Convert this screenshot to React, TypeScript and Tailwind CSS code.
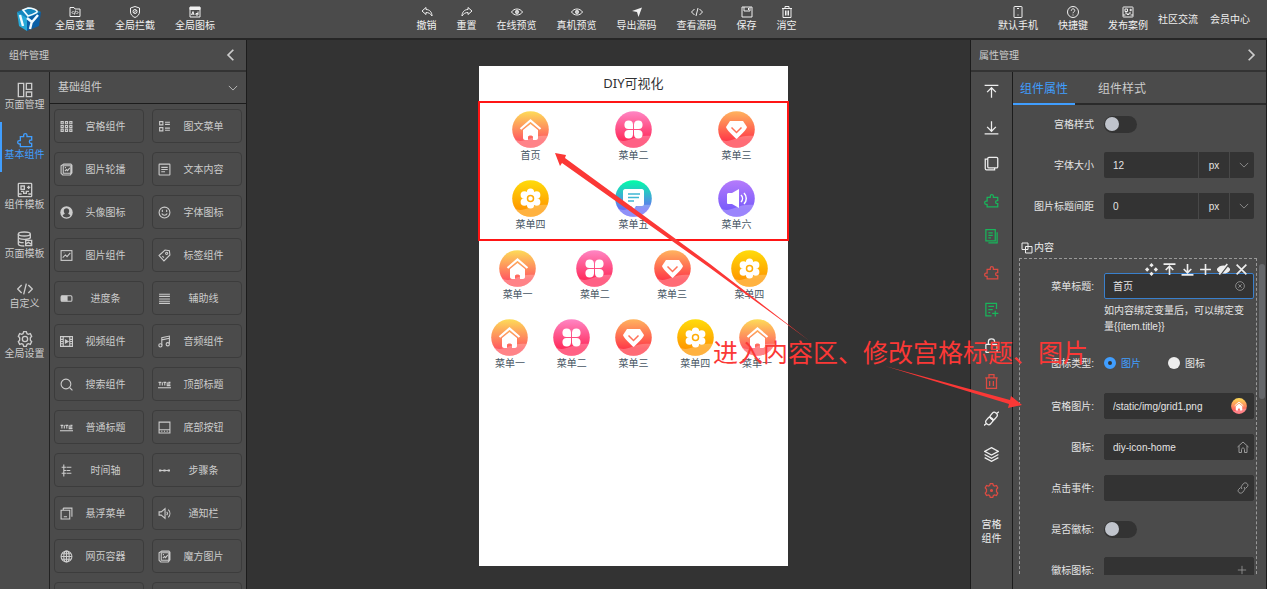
import { useId, useState } from 'react'
import type { ReactNode } from 'react'

type IconProps = {
  name: string
  className?: string
}

type MenuKind = 'home' | 'clover' | 'diamond' | 'flower' | 'message' | 'sound'

type MenuItem = {
  kind: MenuKind
  title: string
}

const panelIcon = (
  <>
    <rect x="2" y="2" width="20" height="20" rx="1" />
    <path d="M6 6h5v5H6zM15 8h5M17.500 5.500v5M6 14h4v3h4v-3h4M2 18h5M17 18h5" />
  </>
)

const pictureIcon = (
  <>
    <rect x="2" y="3" width="20" height="18" />
    <path d="M5 16l5-5 3 3 6-7M7 7h1" />
  </>
)

const roundPictureIcon = (
  <>
    <path d="M7 2h13l2 2v14l-3 4H5l-3-3V5zM6 5v14h14V5z" />
    <path d="M9 15l3-3 2 2 4-5M9 8.500h2" />
  </>
)

const puzzleIcon = (
  <path d="M5 7h5V5a2.500 2.500 0 0 1 5 0v2h7v5h-1a2.500 2.500 0 0 0 0 5h1v5H5v-4H3.500a2.500 2.500 0 0 1 0-5H5z" />
)

const titleIcon = (
  <>
    <path d="M1 8h5M3.500 8v6M8 8v6M10 8h5M12.500 8v6M17 8v6h2M23 8h-3v6h3M20 11h3" />
    <path d="M0 18h24" />
  </>
)

const icons: Record<string, ReactNode> = {
  folderCode: (
    <>
      <path d="M2 21V3h8l2 3h10v15z" />
      <path d="M9 10l-3 3 3 3M15 10l3 3-3 3M13 9l-2 8" />
    </>
  ),
  shield: (
    <>
      <path d="M12 1l9 3v8c0 5-4 9-9 11-5-2-9-6-9-11V4z" />
      <circle cx="12" cy="11" r="4" />
      <path d="M9 14l6-6" />
    </>
  ),
  fontBox: (
    <>
      <path d="M2 2h20v20H2z" />
      <path d="M2 3h20v4H2z" fill="currentColor" />
      <path d="M5 18l3-7 2 7M6 16h3M18 11v7M18 15h-4v3h4" />
    </>
  ),
  undo: <path d="M10 3L2 10l8 7v-4c5 0 9 2 12 7 0-8-5-13-12-13z" />,
  redo: <path d="M14 3l8 7-8 7v-4c-5 0-9 2-12 7 0-8 5-13 12-13z" />,
  eye: (
    <>
      <path d="M1 12c5-8 17-8 22 0-5 8-17 8-22 0z" />
      <circle cx="12" cy="12" r="2.500" strokeWidth="3" />
    </>
  ),
  send: <path d="M2 10L22 3l-7 19-3-10z" fill="currentColor" stroke="none" />,
  code: <path d="M7 6l-6 6 6 6M17 6l6 6-6 6M14 4l-4 16" />,
  save: (
    <>
      <path d="M2 2h20v20H2zM6 2v8h12V2" />
      <path d="M15 4v4" />
    </>
  ),
  trash: <path d="M2 5h20M8 5V1h8v4M4 5v18h16V5M9 9v10M12 9v10M15 9v10" />,
  phone: (
    <>
      <rect x="4" y="1" width="16" height="22" rx="1" />
      <path d="M10 5h4M11 18h2" />
    </>
  ),
  help: (
    <>
      <circle cx="12" cy="12" r="11" />
      <path d="M8.500 9.500c0-5 7-5 7-.500 0 3-3.500 2.500-3.500 5.500M12 17v2" />
    </>
  ),
  panel: panelIcon,
  layout: <path d="M2 2h8v20H2zM14 2h8v9h-8zM14 15h8v7h-8z" />,
  puzzle: puzzleIcon,
  database: (
    <>
      <ellipse cx="11" cy="4.500" rx="9" ry="3" />
      <path d="M2 4.500v15c0 2 4 3 9 3M20 4.500V11M2 9.500c0 2 4 3 9 3M2 14.500c0 2 4 3 8 3M20 10c-1 2-4 2.500-9 2.500" />
      <path d="M13 14h9v8h-9zM13 20l4-3 5 3" />
    </>
  ),
  gear: (
    <>
      <path d="M10 1h4l1 3 2 1 3-1 2 4-2 2v4l2 2-2 4-3-1-2 1-1 3h-4l-1-3-2-1-3 1-2-4 2-2v-4L2 8l2-4 3 1 2-1z" />
      <circle cx="12" cy="12" r="4" />
    </>
  ),
  grid: <path d="M2 3h4v4H2zM10 3h4v4h-4zM18 3h4v4h-4zM2 10h4v4H2zM10 10h4v4h-4zM18 10h4v4h-4zM2 17h4v4H2zM10 17h4v4h-4zM18 17h4v4h-4z" />,
  list: <path d="M3 3h6v6H3zM3 14h6v6H3zM13 4h9M13 8h9M13 15h9M13 19h9" />,
  roundPicture: roundPictureIcon,
  text: (
    <>
      <rect x="2" y="2" width="20" height="20" rx="1" />
      <path d="M6 8h12M6 12h12M6 16h7" />
    </>
  ),
  avatar: (
    <>
      <circle cx="12" cy="12" r="11.500" fill="currentColor" stroke="none" />
      <path
        d="M12 4c3 0 5 2 5 5 0 2-1 4-2 5 0 2 4 1 4 4-3 4-11 4-14 0 0-3 4-2 4-4-1-1-2-3-2-5 0-3 2-5 5-5z"
        fill="#4b4b4b"
        stroke="none"
      />
    </>
  ),
  smile: (
    <>
      <circle cx="12" cy="12" r="10" />
      <path d="M8 7v4M16 7v4M7 14c2 4 8 4 10 0" />
    </>
  ),
  picture: pictureIcon,
  tag: (
    <>
      <path d="M2 12L13 2l8 1 1 8-11 11z" />
      <circle cx="16" cy="8" r="2" />
      <path d="M8 13l3 3" />
    </>
  ),
  progress: (
    <>
      <rect x="2" y="7" width="20" height="10" rx="2" />
      <path d="M3 8h10v8H3z" fill="currentColor" />
    </>
  ),
  lines: <path d="M2 4h20M2 8h20M2 13h20M2 17h20M2 21h20" />,
  video: (
    <>
      <path d="M1 3h22v18H1zM6 3v18M18 3v18M1 8h5M1 12h5M1 16h5M18 8h5M18 12h5M18 16h5" />
      <path d="M10 9l5 3-5 3z" fill="currentColor" />
    </>
  ),
  music: (
    <>
      <path d="M7 19V5l14-3v14M7 9l14-3" />
      <circle cx="4.500" cy="19" r="3" />
      <circle cx="18" cy="17" r="3" />
    </>
  ),
  search: (
    <>
      <circle cx="11" cy="11" r="9" />
      <path d="M18 18l5 5" />
    </>
  ),
  title: titleIcon,
  bottomBar: <path d="M2 2h20v20H2zM2 16h20M6 19h2M11 19h2M16 19h2" />,
  timeline: <path d="M7 1v22M3 6h8M3 17h8M12 6h9M12 12h7M12 17h9M7 12h4" />,
  steps: (
    <>
      <path d="M2 12h20" />
      <path d="M3 11h2v2H3zM11 11h2v2h-2zM19 11h2v2h-2z" fill="currentColor" />
    </>
  ),
  window: <path d="M2 6h16v16H2zM6 2h16v16M6 2v3M7 18h6" />,
  sound: <path d="M2 9h4l7-6v18l-7-6H2zM16 9c2 2 2 4 0 6M19 5c4 4 4 10 0 14" />,
  globe: (
    <>
      <circle cx="12" cy="12" r="10" />
      <ellipse cx="12" cy="12" rx="5" ry="10" />
      <path d="M2 12h20M4 7h16M4 17h16M12 2v20" />
    </>
  ),
  chevronLeft: <path d="M16 3l-9 9 9 9" strokeWidth="3" />,
  chevronRight: <path d="M8 3l9 9-9 9" strokeWidth="3" />,
  chevronDown: <path d="M2 7l10 10L22 7" />,
  toTop: <path d="M1 2h22M12 22V6M5 13l7-7 7 7" />,
  toBottom: <path d="M1 22h22M12 2v16M5 11l7 7 7-7" />,
  copy: (
    <>
      <rect x="6" y="2" width="16" height="17" rx="2" />
      <path d="M6 5H2v15c0 1 1 2 2 2h13v-3" />
    </>
  ),
  pages: <path d="M3 1h15v18H3zM7 6h7M7 10h7M7 14h4M21 5v17H7" />,
  noteAdd: <path d="M20 11V2H3v20h9M7 7h9M7 12h7M7 17h3M18 14v9M13 18h10" />,
  lock: (
    <>
      <rect x="3" y="10" width="18" height="13" rx="1" />
      <path d="M7 10V6c0-6 10-6 10 0v2M12 14v4" />
    </>
  ),
  bin: <path d="M2 6h20M8 6V1h8v5M4 6v17h16V6M9 11v8M15 11v8" />,
  link: (
    <>
      <rect x="4" y="10" width="9" height="12" rx="4" transform="rotate(40 8.500 16)" />
      <rect x="11" y="2" width="9" height="12" rx="4" transform="rotate(40 15.500 8)" />
      <path d="M0 23l4-3M20 4l4-3M8 9l8 7" />
    </>
  ),
  chain: <path d="M10 14c-3-3-1-6 0-7l3-4c5-4 11 2 8 6l-4 4M14 10c3 3 1 6 0 7l-3 4c-5 4-11-2-8-6l4-4" />,
  layers: <path d="M12 1l11 6-11 6L1 7zM1 12l11 6 11-6M1 17l11 6 11-6" />,
  cog: (
    <>
      <path d="M10 1h4l1 3 2 1 3-1 2 4-2 2v4l2 2-2 4-3-1-2 1-1 3h-4l-1-3-2-1-3 1-2-4 2-2v-4L2 8l2-4 3 1 2-1z" />
      <circle cx="12" cy="12" r="1.500" fill="currentColor" />
    </>
  ),
  union: <path d="M2 2h12v13H2zM9 9h13v13H9z" />,
  move: (
    <path
      d="M12 0l4 4-4 4-4-4zM12 16l4 4-4 4-4-4zM0 12l4-4 4 4-4 4zM16 12l4-4 4 4-4 4z"
      fill="currentColor"
      stroke="none"
    />
  ),
  plus: <path d="M12 2v20M2 12h20" />,
  eyeOff: (
    <>
      <path d="M1 12c5-8 17-8 22 0-5 8-17 8-22 0z" fill="currentColor" />
      <path d="M6 22L21 3" stroke="#4b4b4b" />
      <path d="M4 21L19 2" />
    </>
  ),
  close: <path d="M3 3l18 18M21 3L3 21" />,
  clear: (
    <>
      <circle cx="12" cy="12" r="10.500" />
      <path d="M8 8l8 8M16 8l-8 8" />
    </>
  ),
  house: <path d="M1 12L12 2l11 10M4 10v13h5v-6c0-4 6-4 6 0v6h5V10" />,
}

function Icon({ name, className = 'size-3' }: IconProps) {
  return (
    <svg
      viewBox="0 0 24 24"
      fill="none"
      stroke="currentColor"
      strokeWidth="2"
      className={`shrink-0 ${className}`}
      aria-hidden="true"
    >
      {icons[name]}
    </svg>
  )
}

function Logo() {
  return (
    <svg viewBox="0 0 24 24" className="w-6 shrink-0" aria-label="DIY">
      <path d="M0 5l10 5v14L2 19z" fill="#27a9d8" />
      <path d="M24 5l-14 5v14l12-5z" fill="#0b5fa6" />
      <path d="M0 5l12-5 12 5-14 6z" fill="#1487bf" />
      <path d="M6 3l5-2c4 0 10 2 9 4-2 2-6 3-9 4z" fill="none" stroke="#f2fbff" strokeWidth="1.700" />
      <path d="M3 8l3 11" fill="none" stroke="#f2fbff" strokeWidth="2.400" />
      <path d="M10 11l5 4 6-7M15 14l-2 8" fill="none" stroke="#f2fbff" strokeWidth="2.400" />
    </svg>
  )
}

const gradients: Record<MenuKind, [string, string]> = {
  home: ['#fddc58', '#ff5a60'],
  clover: ['#ff86c4', '#ff2c5c'],
  diamond: ['#ffb45f', '#ff3b48'],
  flower: ['#ffdc0a', '#ff9800'],
  message: ['#00ffa6', '#6a6cf6'],
  sound: ['#b57bfb', '#7a5cfb'],
}

const menuShapes: Record<MenuKind, ReactNode> = {
  home: (
    <>
      <path d="M11 19v8c0 1 1 2 2 2h3v-3c0-2 5-2 5 0v3h3c1 0 2-1 2-2v-8l-7.500-6z" fill="#fff" />
      <path d="M8.500 18L18.500 9.500l10 8.500" fill="none" stroke="#fff" strokeWidth="2.200" />
    </>
  ),
  clover: (
    <g fill="#fff">
      <path d="M18 18h-4.500a4.300 4.300 0 1 1 4.500-4.500zM19 18v-4.500a4.300 4.300 0 1 1 4.500 4.500zM18 19v4.500a4.300 4.300 0 1 1-4.500-4.500zM19 19h4.500a4.300 4.300 0 1 1-4.500 4.500z" />
    </g>
  ),
  diamond: (
    <>
      <path d="M12 10h13l4 6c0 2-8 10-10.500 12C16 26 8 18 8 16z" fill="#fff" />
      <path d="M13.500 16.500l5 5 5-5" fill="none" stroke="#ff7259" strokeWidth="1.500" />
    </>
  ),
  flower: (
    <>
      <g fill="#fff">
        <circle cx="18.500" cy="12" r="3.600" />
        <circle cx="18.500" cy="25" r="3.600" />
        <circle cx="12.400" cy="15" r="3.800" />
        <circle cx="24.600" cy="15" r="3.800" />
        <circle cx="12.400" cy="22" r="3.800" />
        <circle cx="24.600" cy="22" r="3.800" />
        <circle cx="18.500" cy="18.500" r="6.500" />
      </g>
      <circle cx="18.500" cy="18.500" r="3" fill="none" stroke="#ffac05" strokeWidth="1.500" />
    </>
  ),
  message: (
    <>
      <path d="M10 9h17c1 0 2 1 2 2v13c0 1-1 2-2 2h-6l-2 3-3-3h-6c-1 0-2-1-2-2V11c0-1 1-2 2-2z" fill="#fff" />
      <path d="M13 14h12M13 17.500h11M13 21h6" fill="none" stroke="#3fb7d3" strokeWidth="1.300" />
    </>
  ),
  sound: (
    <>
      <path d="M10 13h4l7-4v19l-7-4h-4c-1 0-1-1-1-1v-9z" fill="#fff" />
      <path d="M23 15c2 2 2 5 0 7M26 13c3 3 3 8 0 11" fill="none" stroke="#fff" strokeWidth="1.500" />
    </>
  ),
}

function MenuIcon({ kind, className = 'size-[37px]' }: { kind: MenuKind; className?: string }) {
  const id = useId()
  const [from, to] = gradients[kind]

  return (
    <svg viewBox="0 0 37 37" className={className} aria-hidden="true">
      <defs>
        <linearGradient id={id} x1="0" y1="0" x2="0" y2="1">
          <stop offset="0" stopColor={from} />
          <stop offset="0.800" stopColor={to} />
        </linearGradient>
      </defs>
      <circle cx="18.500" cy="18.500" r="18.300" fill={`url(#${id})`} />
      <path d="M2.500 28c4 3 9 2 14 0 7-3 13-4 20-3-3 7-9 11.500-18 11.500-7 0-12-3-16-8.500z" fill="#fff" fillOpacity="0.250" />
      {menuShapes[kind]}
    </svg>
  )
}

function TopButton({ icon, label }: { icon: string; label: string }) {
  return (
    <button type="button" className="flex flex-col items-center gap-px">
      <Icon name={icon} className="size-3" />
      <span className="leading-[14px]">{label}</span>
    </button>
  )
}

function TopBar() {
  return (
    <header className="flex h-10 shrink-0 items-center justify-between border-b-2 border-[#262626] bg-[#4b4b4b] px-[17px] text-[#f0f0f0]">
      <div className="flex items-center gap-5">
        <div className="flex items-center gap-3.5">
          <Logo />
          <TopButton icon="folderCode" label="全局变量" />
        </div>
        <TopButton icon="shield" label="全局拦截" />
        <TopButton icon="fontBox" label="全局图标" />
      </div>
      <div className="flex items-center gap-5">
        <TopButton icon="undo" label="撤销" />
        <TopButton icon="redo" label="重置" />
        <TopButton icon="eye" label="在线预览" />
        <TopButton icon="eye" label="真机预览" />
        <TopButton icon="send" label="导出源码" />
        <TopButton icon="code" label="查看源码" />
        <TopButton icon="save" label="保存" />
        <TopButton icon="trash" label="消空" />
      </div>
      <div className="flex items-center gap-5">
        <TopButton icon="phone" label="默认手机" />
        <TopButton icon="help" label="快捷键" />
        <div className="flex items-center gap-2.5">
          <TopButton icon="panel" label="发布案例" />
          <a href="#community">社区交流</a>
        </div>
        <a href="#member" className="-ml-2">会员中心</a>
      </div>
    </header>
  )
}

const navItems = [
  { icon: 'layout', label: '页面管理' },
  { icon: 'puzzle', label: '基本组件' },
  { icon: 'panel', label: '组件模板' },
  { icon: 'database', label: '页面模板' },
  { icon: 'code', label: '自定义' },
  { icon: 'gear', label: '全局设置' },
]

const components = [
  { icon: 'grid', label: '宫格组件' },
  { icon: 'list', label: '图文菜单' },
  { icon: 'roundPicture', label: '图片轮播' },
  { icon: 'text', label: '文本内容' },
  { icon: 'avatar', label: '头像图标' },
  { icon: 'smile', label: '字体图标' },
  { icon: 'picture', label: '图片组件' },
  { icon: 'tag', label: '标签组件' },
  { icon: 'progress', label: '进度条' },
  { icon: 'lines', label: '辅助线' },
  { icon: 'video', label: '视频组件' },
  { icon: 'music', label: '音频组件' },
  { icon: 'search', label: '搜索组件' },
  { icon: 'title', label: '顶部标题' },
  { icon: 'title', label: '普通标题' },
  { icon: 'bottomBar', label: '底部按钮' },
  { icon: 'timeline', label: '时间轴' },
  { icon: 'steps', label: '步骤条' },
  { icon: 'window', label: '悬浮菜单' },
  { icon: 'sound', label: '通知栏' },
  { icon: 'globe', label: '网页容器' },
  { icon: 'roundPicture', label: '魔方图片' },
  { icon: '', label: '' },
  { icon: '', label: '' },
]

function LeftPanel() {
  const [active, setActive] = useState('基本组件')

  return (
    <aside className="flex w-[247px] shrink-0 flex-col border-r border-[#1c1c1c] bg-[#4b4b4b] text-[#ccc]">
      <div className="flex h-8 shrink-0 items-center justify-between border-b-2 border-[#333] pr-2 pl-[9px]">
        <h2>组件管理</h2>
        <button type="button" aria-label="收起">
          <Icon name="chevronLeft" className="size-3.5" />
        </button>
      </div>
      <div className="flex min-h-0 flex-1">
        <nav className="w-[50px] shrink-0 border-r border-[#222]">
          <div className="flex h-[299px] flex-col">
            {navItems.map((item) => (
              <button
                key={item.label}
                type="button"
                onClick={() => setActive(item.label)}
                className={`flex flex-1 flex-col items-center justify-center border-l-2 pr-0.5 ${
                  item.label === active ? 'border-[#409eff] text-[#409eff]' : 'border-transparent'
                }`}
              >
                <Icon name={item.icon} className="size-4" />
                <span className="leading-[14px] whitespace-nowrap">{item.label}</span>
              </button>
            ))}
          </div>
        </nav>
        <div className="flex min-h-0 flex-1 flex-col">
          <button type="button" className="flex h-8 shrink-0 items-center justify-between border-b border-[#1c1c1c] px-2 text-[11px]">
            基础组件
            <Icon name="chevronDown" className="size-2.5" />
          </button>
          <div className="grid min-h-0 grid-cols-2 gap-x-2 gap-y-[9px] overflow-hidden px-1 pt-[5px]">
            {components.map((item, index) => (
              <button
                key={index}
                type="button"
                className="flex h-[34px] items-center rounded-[4px] border border-[#3c3c3c] px-[5px]"
              >
                {item.icon && <Icon name={item.icon} className="size-[13px]" />}
                <span className="flex-1 text-center">{item.label}</span>
              </button>
            ))}
          </div>
        </div>
      </div>
    </aside>
  )
}

const threeColumns: MenuItem[] = [
  { kind: 'home', title: '首页' },
  { kind: 'clover', title: '菜单二' },
  { kind: 'diamond', title: '菜单三' },
  { kind: 'flower', title: '菜单四' },
  { kind: 'message', title: '菜单五' },
  { kind: 'sound', title: '菜单六' },
]

const fourColumns: MenuItem[] = [
  { kind: 'home', title: '菜单一' },
  { kind: 'clover', title: '菜单二' },
  { kind: 'diamond', title: '菜单三' },
  { kind: 'flower', title: '菜单四' },
]

const fiveColumns: MenuItem[] = [...fourColumns, { kind: 'home', title: '菜单一' }]

function MenuGrid({ items, className }: { items: MenuItem[]; className: string }) {
  return (
    <ul className={`grid ${className}`}>
      {items.map((item, index) => (
        <li key={index} className="flex h-[69px] flex-col items-center pt-[9px]">
          <MenuIcon kind={item.kind} />
          <span className="leading-4">{item.title}</span>
        </li>
      ))}
    </ul>
  )
}

function Preview() {
  return (
    <main className="flex min-w-0 flex-1 justify-center bg-[#333] pt-[26px] pl-[50px]">
      <div className="h-[500px] w-[309px] bg-white text-[#475663]">
        <h1 className="flex h-9 items-center justify-center font-['Noto_Sans','Noto_Sans_CJK_SC',sans-serif] text-[13px] text-[#303133]">
          DIY可视化
        </h1>
        <MenuGrid items={threeColumns} className="mb-px grid-cols-3 outline-1 outline-offset-0 outline-[#ff1515] ring-1 ring-[#ff1515] ring-inset" />
        <MenuGrid items={fourColumns} className="grid-cols-4" />
        <MenuGrid items={fiveColumns} className="grid-cols-5" />
      </div>
    </main>
  )
}

const tools = [
  { icon: 'toTop', label: '置顶', color: 'text-[#eee]' },
  { icon: 'toBottom', label: '置底', color: 'text-[#eee]' },
  { icon: 'copy', label: '复制', color: 'text-[#eee]' },
  { icon: 'puzzle', label: '保存组件', color: 'text-[#19b55b]' },
  { icon: 'pages', label: '复制页面', color: 'text-[#19b55b]' },
  { icon: 'puzzle', label: '移除组件', color: 'text-[#dd4b42]' },
  { icon: 'noteAdd', label: '添加', color: 'text-[#19b55b]' },
  { icon: 'lock', label: '锁定', color: 'text-[#eee]' },
  { icon: 'bin', label: '删除', color: 'text-[#dd4b42]' },
  { icon: 'link', label: '绑定', color: 'text-[#eee]' },
  { icon: 'layers', label: '图层', color: 'text-[#eee]' },
  { icon: 'cog', label: '设置', color: 'text-[#dd4b42]' },
]

function ToolStrip() {
  return (
    <div className="flex w-[42px] shrink-0 flex-col border-r border-[#1c1c1c] pt-px">
      <div className="flex h-[436px] flex-col">
        {tools.map((tool) => (
          <button
            key={tool.label}
            type="button"
            aria-label={tool.label}
            className={`flex flex-1 items-center justify-center ${tool.color}`}
          >
            <Icon name={tool.icon} className="size-[15px]" />
          </button>
        ))}
      </div>
      <p className="mx-auto mt-[9px] w-5 text-center leading-[14px] text-[#eee]">宫格组件</p>
    </div>
  )
}

function Field({ label, htmlFor, children }: { label: string; htmlFor: string; children: ReactNode }) {
  return (
    <div className="flex min-h-[26px] items-center gap-2.5">
      <label htmlFor={htmlFor} className="flex-1 text-right whitespace-nowrap">
        {label}
      </label>
      <div className="flex w-[150px] shrink-0 items-center">{children}</div>
    </div>
  )
}

function Switch({ id }: { id: string }) {
  return (
    <input
      id={id}
      type="checkbox"
      role="switch"
      className="h-[17px] w-[33px] appearance-none rounded-full bg-[#333] before:block before:size-3.5 before:translate-x-px before:translate-y-px before:rounded-full before:bg-[#c0c4cc] checked:before:translate-x-4"
    />
  )
}

function UnitInput({ id, value }: { id: string; value: string }) {
  return (
    <div className="flex h-[26px] w-full divide-x divide-[#484848] overflow-hidden rounded-[2px] bg-[#333]">
      <input id={id} defaultValue={value} className="min-w-0 flex-1 px-[9px] outline-none" />
      <select aria-label="单位" className="w-[31px] appearance-none text-center outline-none">
        <option>px</option>
        <option>%</option>
      </select>
      <button type="button" aria-label="展开" className="flex w-6 items-center justify-center pl-1 text-[#999]">
        <Icon name="chevronDown" className="size-2.5" />
      </button>
    </div>
  )
}

function TextInput({ id, value, focused, children }: { id: string; value: string; focused?: boolean; children: ReactNode }) {
  return (
    <div
      className={`flex h-[26px] w-full items-center rounded-[2px] border bg-[#333] pr-2 pl-2 ${
        focused ? 'border-[#3a80cc]' : 'border-[#333]'
      }`}
    >
      <input id={id} defaultValue={value} className="min-w-0 flex-1 outline-none" />
      {children}
    </div>
  )
}

function Radio({ label, checked }: { label: string; checked?: boolean }) {
  return (
    <label className={`flex items-center gap-[5px] ${checked ? 'text-[#409eff]' : ''}`}>
      <input
        type="radio"
        name="iconType"
        defaultChecked={checked}
        className="size-3 appearance-none rounded-full bg-[#eee] checked:border-4 checked:border-[#409eff] checked:bg-[#333]"
      />
      {label}
    </label>
  )
}

const itemActions = [
  { icon: 'move', label: '移动' },
  { icon: 'toTop', label: '上移' },
  { icon: 'toBottom', label: '下移' },
  { icon: 'plus', label: '新增' },
  { icon: 'eyeOff', label: '隐藏' },
  { icon: 'close', label: '删除' },
]

function ContentItem() {
  return (
    <div className="relative flex flex-col gap-[15px] border border-dashed border-[#999] pt-3.5 pr-0.5">
      <div className="absolute top-1 right-2 z-10 flex gap-[5px] text-[#eee]">
        {itemActions.map((action) => (
          <button key={action.label} type="button" aria-label={action.label}>
            <Icon name={action.icon} className="size-[13px] stroke-[3]" />
          </button>
        ))}
      </div>
      <div>
        <Field label="菜单标题:" htmlFor="menuTitle">
          <TextInput id="menuTitle" value="首页" focused>
            <Icon name="clear" className="size-2.5 text-[#999]" />
          </TextInput>
        </Field>
        <p className="ml-auto w-[150px] pt-1 pr-2 leading-4">如内容绑定变量后，可以绑定变量{'{{item.title}}'}</p>
      </div>
      <div className="pb-0.5">
        <Field label="图标类型:" htmlFor="iconTypes">
          <div id="iconTypes" className="flex gap-[27px]">
            <Radio label="图片" checked />
            <Radio label="图标" />
          </div>
        </Field>
      </div>
      <Field label="宫格图片:" htmlFor="gridImage">
        <TextInput id="gridImage" value="/static/img/grid1.png">
          <MenuIcon kind="home" className="-mr-0.5 size-4" />
        </TextInput>
      </Field>
      <Field label="图标:" htmlFor="gridIcon">
        <TextInput id="gridIcon" value="diy-icon-home">
          <Icon name="house" className="-mr-1 size-3 text-[#999]" />
        </TextInput>
      </Field>
      <Field label="点击事件:" htmlFor="clickEvent">
        <TextInput id="clickEvent" value="">
          <Icon name="chain" className="-mr-1 size-3 text-[#999]" />
        </TextInput>
      </Field>
      <Field label="是否徽标:" htmlFor="badge">
        <Switch id="badge" />
      </Field>
      <Field label="徽标图标:" htmlFor="badgeIcon">
        <TextInput id="badgeIcon" value="">
          <Icon name="plus" className="-mr-0.5 size-2.5 text-[#999]" />
        </TextInput>
      </Field>
    </div>
  )
}

function RightPanel() {
  const [tab, setTab] = useState('组件属性')

  return (
    <aside className="flex w-[297px] shrink-0 flex-col border-x border-[#1c1c1c] bg-[#4b4b4b] text-[#e4e4e4]">
      <div className="flex h-8 shrink-0 items-center justify-between border-b-2 border-[#333] px-2 text-[#ccc]">
        <h2>属性管理</h2>
        <button type="button" aria-label="展开">
          <Icon name="chevronRight" className="size-3.5" />
        </button>
      </div>
      <div className="flex min-h-0 flex-1">
        <ToolStrip />
        <div className="flex min-w-0 flex-1 flex-col pb-3.5">
          <div role="tablist" className="flex h-[33px] shrink-0 gap-4 border-b-2 border-[#2a2a2a] text-xs text-[#ccc]">
            {['组件属性', '组件样式'].map((label) => (
              <button
                key={label}
                type="button"
                role="tab"
                aria-selected={tab === label}
                onClick={() => setTab(label)}
                className={`-mb-0.5 border-b-2 px-[7px] pt-0.5 ${
                  tab === label ? 'border-[#409eff] text-[#409eff]' : 'border-transparent'
                }`}
              >
                {label}
              </button>
            ))}
          </div>
          <div className="flex min-h-0 flex-1">
            <div className="flex min-w-0 flex-1 flex-col overflow-hidden pt-1.5 pl-1.5">
              <div className="flex flex-col gap-[15px] pr-[3px]">
                <Field label="宫格样式" htmlFor="gridStyle">
                  <Switch id="gridStyle" />
                </Field>
                <Field label="字体大小" htmlFor="fontSize">
                  <UnitInput id="fontSize" value="12" />
                </Field>
                <Field label="图片标题间距" htmlFor="titleGap">
                  <UnitInput id="titleGap" value="0" />
                </Field>
              </div>
              <h3 className="flex items-center gap-px pt-[22px] pb-[3px] pl-0.5 leading-[14px] text-[#eee]">
                <Icon name="union" className="size-3" />
                内容
              </h3>
              <ContentItem />
            </div>
            <div className="flex w-[9px] shrink-0 justify-center pt-[159px]">
              <div className="h-[135px] w-1.5 rounded-full bg-[#65676a]" />
            </div>
          </div>
        </div>
      </div>
    </aside>
  )
}

function Annotation() {
  return (
    <div className="pointer-events-none absolute inset-0 text-[#fb3836]">
      <svg className="absolute top-[150px] left-[550px] h-[260px] w-[480px]" viewBox="0 0 480 260" fill="currentColor">
        <path d="M5 3l11 2-1 3 145 106 99 76.500-101-74L12 13l-2 3z" />
        <path d="M335 216l125 34 1-4 11 9-14 3 1-4z" />
      </svg>
      <p className="absolute top-[335px] left-[713px] text-[25px] leading-9 whitespace-nowrap">
        进入内容区、修改宫格标题、图片
      </p>
    </div>
  )
}

export default function App() {
  return (
    <div className="relative flex h-screen flex-col overflow-hidden bg-[#333] font-['Liberation_Sans','Noto_Sans_CJK_SC',sans-serif] text-[10px]">
      <TopBar />
      <div className="flex min-h-0 flex-1">
        <LeftPanel />
        <Preview />
        <RightPanel />
      </div>
      <Annotation />
    </div>
  )
}
